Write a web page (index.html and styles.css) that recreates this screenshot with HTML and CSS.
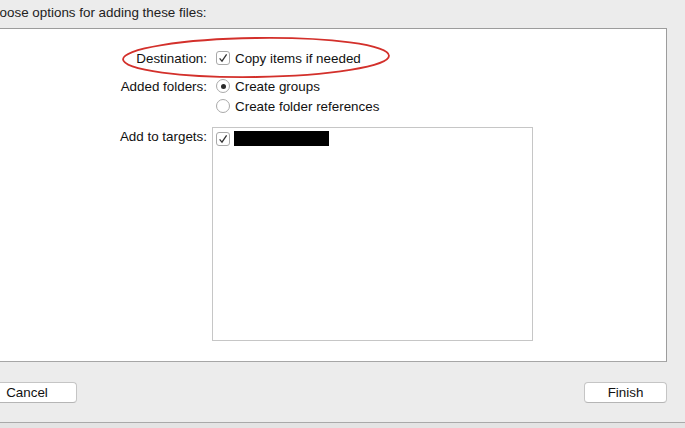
FILE: index.html
```html
<!DOCTYPE html>
<html>
<head>
<meta charset="utf-8">
<link rel="stylesheet" href="styles.css">
</head>
<body>
<div class="sheet">
  <div class="title">Choose options for adding these files:</div>
  <div class="panel">
    <div class="form">
      <div class="label r1">Destination:</div>
      <div class="field r1">
        <span class="check on"><svg viewBox="0 0 14 14" width="14" height="14"><path d="M3.6 7.4 L6 10.2 L10.6 3.4" fill="none" stroke="#333" stroke-width="1.3"/></svg></span>
        <span>Copy items if needed</span>
      </div>
      <div class="label r2">Added folders:</div>
      <div class="field r2 stack">
        <div class="opt"><span class="radio on"></span><span>Create groups</span></div>
        <div class="opt"><span class="radio"></span><span>Create folder references</span></div>
      </div>
      <div class="label r3">Add to targets:</div>
      <div class="field r3">
        <div class="targets">
          <div class="target-row">
            <span class="check on"><svg viewBox="0 0 14 14" width="14" height="14"><path d="M3.6 7.4 L6 10.2 L10.6 3.4" fill="none" stroke="#333" stroke-width="1.3"/></svg></span>
            <span class="redact"></span>
          </div>
        </div>
      </div>
    </div>
  </div>
  <div class="footer">
    <button class="btn cancel">Cancel</button>
    <button class="btn finish">Finish</button>
  </div>
  <div class="edge"></div>
  <svg class="annot" width="685" height="428" viewBox="0 0 685 428">
    <ellipse cx="256" cy="57.5" rx="133" ry="19.5" transform="rotate(-0.8 256 57.5)" fill="none" stroke="#d3302b" stroke-width="1.8"/>
  </svg>
</div>
</body>
</html>
```
FILE: styles.css
```css
* { box-sizing: border-box; }
html, body { margin: 0; padding: 0; }
body {
  background: #ececec;
  font-family: "Liberation Sans", Arial, sans-serif;
  font-size: 13.4px;
  color: #111;
  width: 685px;
  height: 428px;
  overflow: hidden;
}
.sheet {
  position: relative;
  width: 685px;
  height: 428px;
  display: flex;
  flex-direction: column;
}
.title {
  height: 28px;
  line-height: 25px;
  margin-left: -17.5px;
  color: #222;
  white-space: nowrap;
}
.panel {
  height: 334px;
  width: 668px;
  margin-left: -1px;
  background: #fff;
  border: 1px solid #9c9c9c;
  border-bottom-color: #a6a6a6;
  padding-top: 19px;
  flex: none;
}
.form {
  display: grid;
  grid-template-columns: 207px 321px;
  column-gap: 5px;
  row-gap: 8px;
  align-items: start;
}
.label {
  text-align: right;
  height: 20px;
  line-height: 22px;
  white-space: nowrap;
}
.label.r3 { margin-top: 2px; }
.field { display: flex; align-items: center; gap: 5px; height: 20px; padding-left: 4px; }
.field > span:last-child, .opt > span:last-child { padding-top: 1px; }
.field.stack { flex-direction: column; align-items: flex-start; gap: 0; height: 40px; }
.field.r3 { height: auto; padding-left: 0; margin-top: 3px; }
.opt { display: flex; align-items: center; gap: 5px; height: 20px; }
.check {
  width: 14px; height: 14px;
  border: 1px solid #a9a9a9;
  border-radius: 3px;
  background: #fff;
  display: inline-flex;
  align-items: center;
  justify-content: center;
  flex: none;
}
.check svg { display: block; margin: -1px; }
.radio {
  width: 14px; height: 14px;
  border: 1px solid #a9a9a9;
  border-radius: 50%;
  background: #fff;
  display: inline-flex;
  align-items: center;
  justify-content: center;
  flex: none;
}
.radio.on::after {
  content: "";
  width: 5px; height: 5px;
  border-radius: 50%;
  background: #2a2a2a;
}
.targets {
  width: 321px;
  height: 214px;
  border: 1px solid #c6c6c6;
  background: #fff;
  padding: 3px;
}
.target-row { display: flex; align-items: center; gap: 4px; height: 15px; }
.target-row > span:last-child { padding-top: 0; }
.redact { width: 95px; height: 15px; background: #000; }
.footer {
  height: 60px;
  flex: none;
  display: flex;
  align-items: center;
  justify-content: space-between;
  padding-right: 18px;
}
.btn {
  height: 21px;
  border: 1px solid #c5c5c5;
  border-bottom-color: #b5b5b5;
  border-radius: 4px;
  background: #fff;
  font-family: "Liberation Sans", Arial, sans-serif;
  font-size: 13.4px;
  color: #111;
  padding: 0;
  line-height: 19px;
}
.cancel { width: 100px; margin-left: -23px; }
.finish { width: 83px; }
.edge {
  height: 6px;
  flex: none;
  border-top: 1px solid #a9a9a9;
  background: #e4e4e4;
}
.annot { position: absolute; left: 0; top: 0; pointer-events: none; }
```
